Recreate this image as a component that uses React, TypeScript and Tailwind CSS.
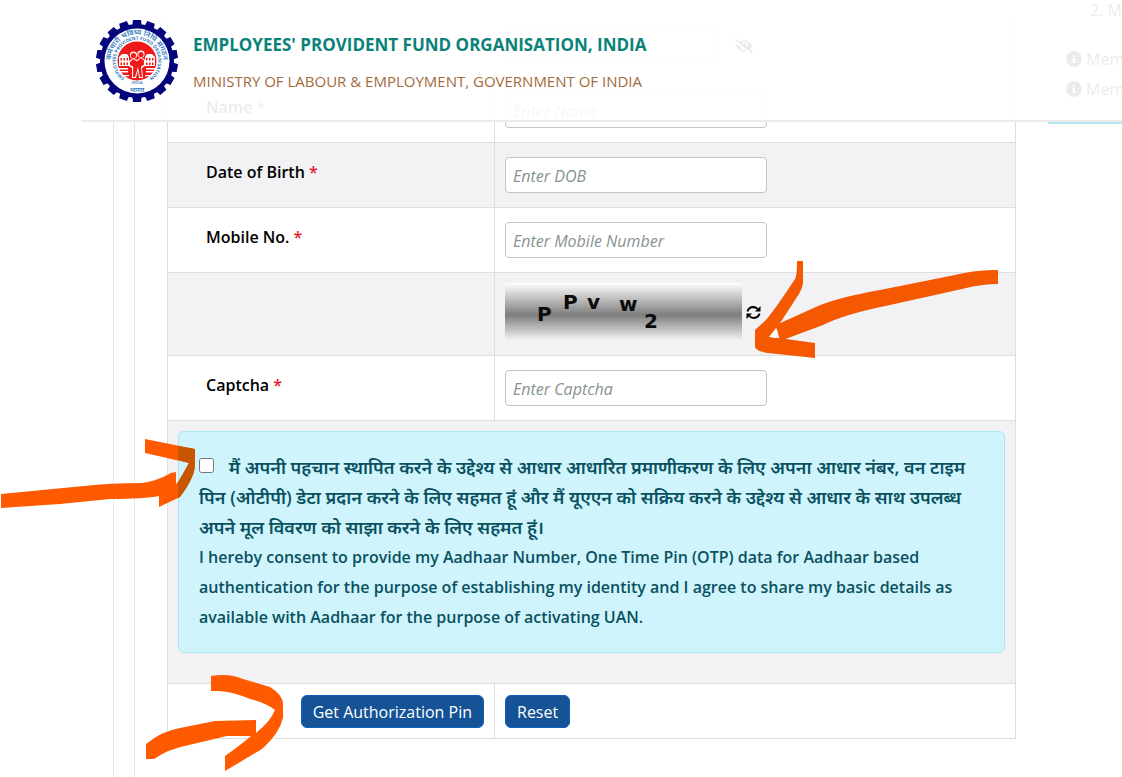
import React from "react";
import { FaEyeSlash, FaInfoCircle } from "react-icons/fa";

function Emblem() {
  const teeth = Array.from({ length: 18 }, (_, i) => i * 20);
  return (
    <svg viewBox="-41 -41 82 82" className="h-[84px] w-[82px] shrink-0" role="img" aria-label="EPFO emblem">
      {teeth.map((a) => (
        <path key={a} d="M-4.8-35 L-4-41 H4 L4.800-35Z" fill="#04047c" transform={`rotate(${a})`} />
      ))}
      <circle r="37" fill="#04047c" />
      <circle r="32.500" fill="#fff" />
      <defs>
        <path id="outerArc" d="M-25.500 5 A26 26 0 1 1 25.500 5" />
        <path id="innerArc" d="M-12 17.500 A21.200 21.200 0 1 1 12 17.500" />
      </defs>
      <g fill="#3579c2" fontFamily="'Open Sans', 'Noto Sans', sans-serif" fontWeight="600">
        <text fontSize="7.400" textAnchor="middle">
          <textPath href="#outerArc" startOffset="50%">कर्मचारी भविष्य निधि संगठन</textPath>
        </text>
        <text fontSize="4.600" textAnchor="middle" fontWeight="700">
          <textPath href="#innerArc" startOffset="50%">EMPLOYEES PROVIDENT FUND ORGANISATION</textPath>
        </text>
        <text x="0" y="23.200" fontSize="4" textAnchor="middle">INDIA</text>
        <text x="0" y="30.500" fontSize="7" textAnchor="middle">भारत</text>
      </g>
      <circle r="19.500" fill="#f01818" />
      <g fill="#fff">
        <path d="M-18-4 L-15-7 H-10 L-8-4 V5 H-18Z M18-4 L15-7 H10 L8-4 V5 H18Z" />
        <path d="M-18 7h9v1.500h-9z M9 7h9v1.500h-9z M-17 10h8v1.500h-8z M9 10h8v1.500h-8z M-14 14h6v1.200h-6z M8 14h6v1.200h-6z" />
        <circle cx="-3.500" cy="-6" r="3.600" />
        <circle cx="4" cy="-7" r="3.600" />
        <path d="M-8 0 L-4-3 0-1 4-4 8-1 8 5 5 7 6 17 H2 L1 9 -1 17 H-5 L-5 7 -8 5Z" />
      </g>
      <g fill="#f01818">
        <path d="M-16.500-3h1.500v2.500h-1.500z M-13.500-3h1.500v2.500h-1.500z M-10.500-3h1.500v2.500h-1.500z M9-3h1.500v2.500h-1.500z M12-3h1.500v2.500h-1.500z M15-3h1.500v2.500h-1.500z" />
        <path d="M-16.500 1.500h1.500v2.500h-1.500z M-13.500 1.500h1.500v2.500h-1.500z M-10.500 1.500h1.500v2.500h-1.500z M9 1.500h1.500v2.500h-1.500z M12 1.500h1.500v2.500h-1.500z M15 1.500h1.500v2.500h-1.500z" />
        <circle cx="-3.500" cy="-5.500" r="2.600" />
        <circle cx="4" cy="-6.500" r="2.600" />
        <path d="M-7 1 L-4-2 0 .2 4-3 7 -.5 6.800 4 4 5.500 5 16 H3 L1 6 -2 16 H-4 L-3.800 5.500 -7 4Z" />
      </g>
    </svg>
  );
}

function RefreshIcon() {
  return (
    <svg viewBox="0 0 15 15" className="size-[15px]" aria-hidden="true">
      <g fill="none" stroke="#000" strokeWidth="2">
        <path d="M1.800 6.500 V5.500 Q3 2.200 7 2 Q10 2 11.500 4" />
        <path d="M13.200 8.500 V9.500 Q12 12.800 8 13 Q5 13 3.500 11" />
      </g>
      <path d="M14.500 1 V6.500 H9Z M0.500 14 V8.500 H6Z" fill="#000" />
    </svg>
  );
}

type RowProps = {
  label: string;
  id: string;
  placeholder: string;
  shaded?: boolean;
};

function Row({ label, id, placeholder, shaded }: RowProps) {
  return (
    <div className={`grid h-[65px] grid-cols-[327px_1fr] border-b border-[#dedede] ${shaded ? "bg-[#f2f1f3]" : ""}`}>
      <label htmlFor={id} className="border-r border-[#dedede] pt-[17px] pl-[38px] text-base leading-6 font-semibold text-black">
        {label} <span className="text-[#e8192c]">*</span>
      </label>
      <div className="flex items-center px-2.5">
        <input
          id={id}
          placeholder={placeholder}
          className="h-9 w-[262px] rounded border border-[#c4c4c4] bg-white px-[7px] pt-0.5 text-base italic placeholder:text-[#86938f]"
        />
      </div>
    </div>
  );
}

function Captcha() {
  return (
    <svg viewBox="0 0 237 58" className="h-[58px] w-[237px]" role="img" aria-label="Captcha">
      <defs>
        <linearGradient id="shade" x1="0" y1="0" x2="0" y2="1">
          <stop offset="0" stopColor="#fff" />
          <stop offset="0.550" stopColor="#7e7e7e" />
          <stop offset="1" stopColor="#f6f6f6" />
        </linearGradient>
      </defs>
      <rect width="237" height="58" fill="url(#shade)" />
      <g fill="#0c0c0c" fontFamily="'DejaVu Sans', sans-serif" fontWeight="700" fontSize="20">
        <text x="32" y="38">P</text>
        <text x="58" y="26">P</text>
        <text x="82" y="26">v</text>
        <text x="114" y="28">w</text>
        <text x="139" y="45">2</text>
      </g>
    </svg>
  );
}

function Arrows() {
  return (
    <svg viewBox="0 0 1122 777" className="pointer-events-none absolute top-0 left-0 h-[777px] w-[1122px]" aria-hidden="true">
      <g fill="#f45800">
        <path d="M797 261 H803 V283 Q802 290 797 297 L771 337 L815 343 V358 L768 353 Q756 351 755 347 V330 L766 320 Q776 308 795 279 Q797 276 797 261Z" />
        <path d="M776 325 L818 306 Q840 297 880 290 L950 276 Q978 269 998 270 V284 Q982 284 962 289 L890 305 Q845 314 823 325 L780 341Z" />
      </g>
      <path d="M769 337 L776 328 V338Z" fill="#fff" />
      <g fill="#ff5a00">
        <path d="M1 494 L84 486 Q110 483 142 483 Q157 481 171 473 L176 472 V484 L180 480 L189 463 L145 453 V439 L195 449 V467 Q193 480 180 497 L159 507 V496 Q145 499 110 499 L60 504 L1 508Z" />
        <path d="M211 676 Q229 673 243 679 L270 687 Q283 695 283 704 V718 Q279 734 262 749 L225 771 V756 Q242 744 251 736 H227 L189 745 Q168 749 154 759 H146 V744 Q162 731 180 728 L215 721 L256 720 V733 Q270 722 275 710 Q266 703 250 699 Q231 691 217 691 H211Z" />
      </g>
      <path d="M178 446 L195 449 V467 Q193 480 180 497 L178 498 V482 L189 463 L178 460Z" fill="#c85500" />
    </svg>
  );
}

const button = "h-[33px] rounded-md border border-[#0d5fc0] bg-[#155296] px-[11px] pt-0.5 text-base text-white";

export default function App() {
  return (
    <div className="relative min-h-[777px] overflow-hidden bg-white font-['Open_Sans','Noto_Sans',sans-serif]">
      <header className="absolute top-0 right-0 left-[81px] z-10 flex h-[122px] items-start gap-[15px] border-b-2 border-[#e6e6e6]/80 bg-white/92 pt-[19px] pl-[15px]">
        <Emblem />
        <div className="pt-3">
          <h1 className="text-[17px] leading-7 font-bold text-[#0b8278]">EMPLOYEES' PROVIDENT FUND ORGANISATION, INDIA</h1>
          <p className="pt-2.5 text-[15px] leading-6 text-[#a36a3c]">MINISTRY OF LABOUR &amp; EMPLOYMENT, GOVERNMENT OF INDIA</p>
        </div>
      </header>

      <div className="ml-[113px] flex min-h-[777px] border-l border-[#e8e8e8] pl-5">
        <main className="flex-1 border-l border-[#e8e8e8] pt-[13px] pl-8">
          <form className="border border-t-0 border-[#dedede]" onSubmit={(e) => e.preventDefault()}>
            <div className="grid h-[65px] grid-cols-[327px_1fr]">
              <div />
              <div className="flex items-center gap-4 px-2.5">
                <input aria-label="Member number" className="h-9 w-[214px] rounded border border-[#e2e2e2] px-2" />
                <button type="button" aria-label="Hide value"><FaEyeSlash className="text-lg" /></button>
              </div>
            </div>
            <Row label="Name" id="name" placeholder="Enter Name" />
            <Row label="Date of Birth" id="dob" placeholder="Enter DOB" shaded />
            <Row label="Mobile No." id="mobile" placeholder="Enter Mobile Number" />
            <div className="grid h-[83px] grid-cols-[327px_1fr] border-b border-[#dedede] bg-[#f2f1f3]">
              <div className="border-r border-[#dedede]" />
              <div className="flex items-center gap-1 px-2.5 pb-1">
                <Captcha />
                <button type="button" aria-label="Refresh captcha"><RefreshIcon /></button>
              </div>
            </div>
            <Row label="Captcha" id="captcha" placeholder="Enter Captcha" />
            <div className="border-b border-[#dedede] bg-[#f2f1f3] px-2.5 pt-2.5 pb-[30px]">
              <div className="h-[222px] rounded-md border border-[#a9e6f0] bg-[#cff4fc] px-5 py-5 text-base leading-[30px] font-semibold text-[#0a515f]">
                <label htmlFor="consent">
                  <span className="block text-lg leading-[30px]">
                    <input id="consent" type="checkbox" className="mr-2.5 size-[15px] align-[1px]" />{" "}
                    मैं अपनी पहचान स्थापित करने के उद्देश्य से आधार आधारित प्रमाणीकरण के लिए अपना आधार नंबर, वन टाइम पिन (ओटीपी) डेटा प्रदान करने के लिए सहमत हूं और मैं यूएएन को सक्रिय करने के उद्देश्य से आधार के साथ उपलब्ध अपने मूल विवरण को साझा करने के लिए सहमत हूं।
                  </span>
                  <span className="block">
                    I hereby consent to provide my Aadhaar Number, One Time Pin (OTP) data for Aadhaar based authentication for the purpose of establishing my identity and I agree to share my basic details as available with Aadhaar for the purpose of activating UAN.
                  </span>
                </label>
              </div>
            </div>
            <div className="grid h-[54px] grid-cols-[327px_1fr]">
              <div className="flex items-center justify-end border-r border-[#dedede] px-2.5">
                <button className={button}>Get Authorization Pin</button>
              </div>
              <div className="flex items-center px-2.5">
                <button type="reset" className={button}>Reset</button>
              </div>
            </div>
          </form>
        </main>
        <aside className="ml-8 h-[124px] w-[74px] overflow-hidden border-b-2 border-[#b5e8f1] bg-[#e8fbff] pl-[18px] whitespace-nowrap">
          <p className="pl-6 leading-5">2. Member</p>
          <p className="flex items-center gap-1 pt-6 leading-[30px]"><FaInfoCircle className="shrink-0" /> Member</p>
          <p className="flex items-center gap-1 leading-[30px]"><FaInfoCircle className="shrink-0" /> Member</p>
        </aside>
      </div>
      <Arrows />
    </div>
  );
}
